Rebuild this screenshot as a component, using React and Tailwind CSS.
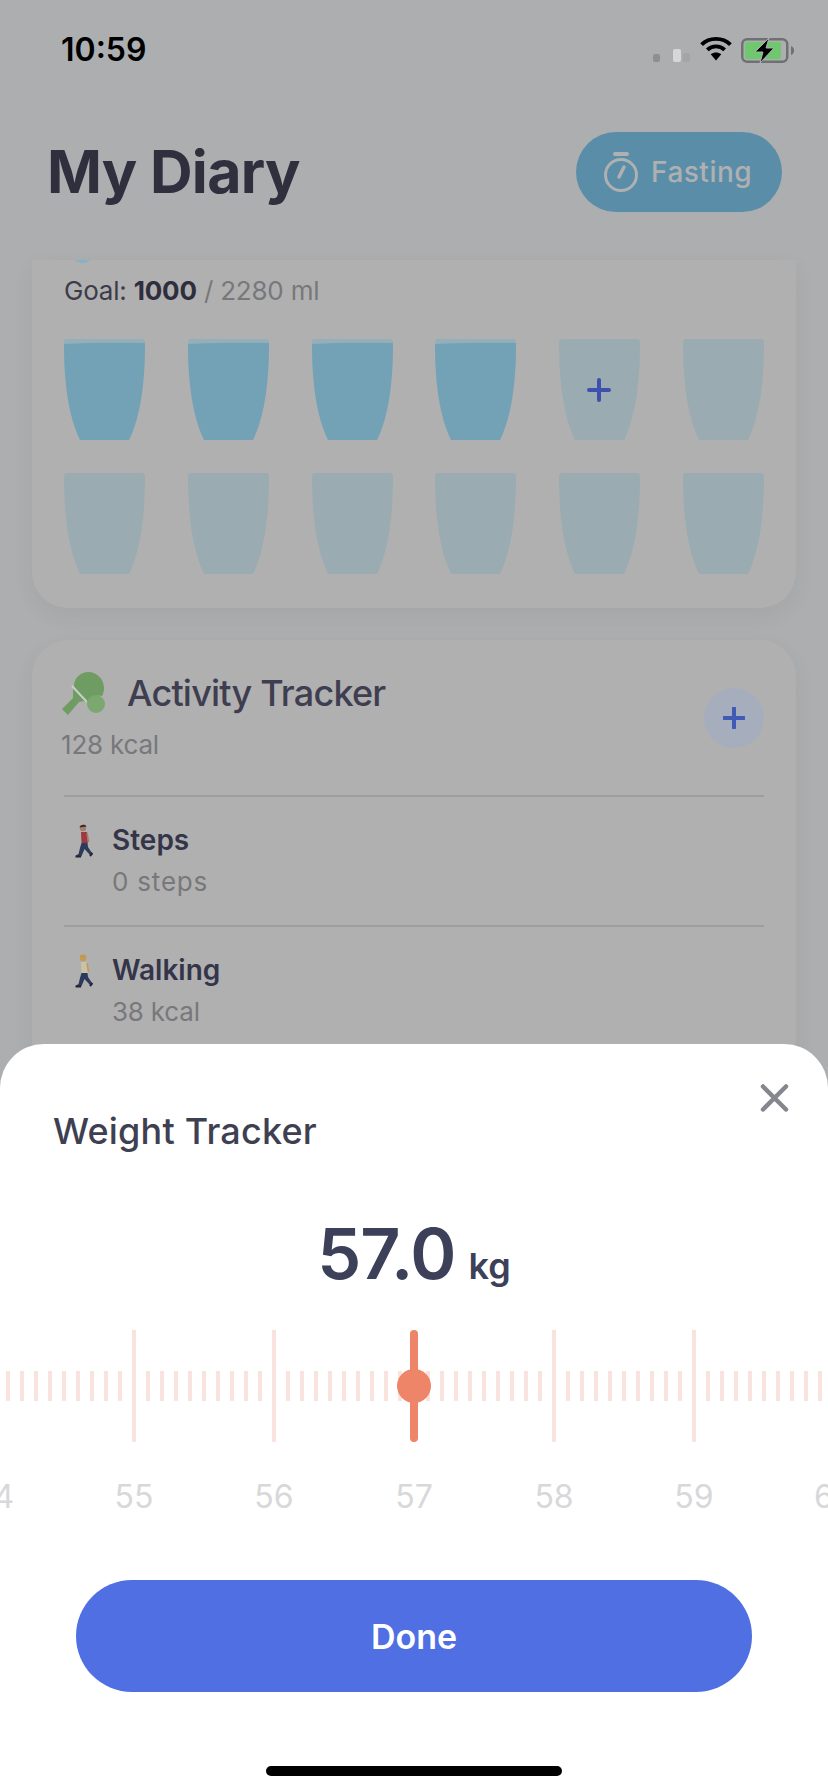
const ticks = Array.from({ length: 59 }, (_, i) => i);
const labels = [54, 55, 56, 57, 58, 59, 60];
const cups = Array.from({ length: 12 }, (_, i) => i);

function Cup({ filled, plus }) {
  const d = "M3 0H78Q81 0 81 3C81 42 77 76 65 101H16C4 76 0 42 0 3Q0 0 3 0Z";
  return (
    <svg width="81" height="101" viewBox="0 0 81 101" className="block">
      <clipPath id={filled ? "water-f" : "water-e"}>
        <path d={d} />
      </clipPath>
      <path d={d} fill={filled ? "#93afba" : "#9aacb1"} />
      {filled && <path d="M0 5Q40 3 81 4V101H0Z" fill="#73a1b6" clipPath="url(#water-f)" />}
      {plus && <path d="M40 41V61M30 51H50" stroke="#3d50ae" strokeWidth="4" strokeLinecap="round" />}
    </svg>
  );
}

function Paddle() {
  return (
    <svg width="44" height="43" viewBox="0 0 44 43" className="block">
      <path d="M13 14C13 5 21 0 27 0C36 0 43 7 43 16C43 20 42 22 41 24C35 22 29 26 28 31C24 30 20 28 16 24L13 14Z" fill="#6e9c62" />
      <path d="M12 16L23 29L18 30L7 43L1 37L12 26Z" fill="#6e9c62" />
      <path d="M11 14L26 30" stroke="#c9cfc4" strokeWidth="2" />
      <circle cx="35" cy="32" r="9" fill="#7aa86e" />
    </svg>
  );
}

function Walker({ shirt, hair, skin }) {
  return (
    <svg width="18" height="34" viewBox="0 0 18 34" className="block">
      <circle cx="8" cy="4" r="3.2" fill={skin} />
      <path d="M4.500 3.500C5 0 11 0 11.500 2.500C9 3 6.500 3 4.500 3.500Z" fill={hair} />
      <path d="M6 8H12L13 19H6.500Z" fill={shirt} />
      <path d="M12 9L13.500 18" stroke={skin} strokeWidth="1.600" />
      <path d="M6.500 19H12.500L13 23L17 29L15 31L9.500 25L7 31L6 33H1V31.500L3.500 30L5 24Z" fill="#2c3a5c" />
      <path d="M0.500 32.500H6M15 32L17.500 29" stroke="#24242c" strokeWidth="2" />
    </svg>
  );
}

function ActivityRow({ name, sub, walker, subClass }) {
  return (
    <div className="h-[130px] pt-[26px] flex items-start border-b-2 border-[#9d9d9e] last:border-b-0">
      <div className="w-[48px] pl-[11px] pt-[1px] shrink-0">{walker}</div>
      <div>
        <div className="text-[28px] leading-[34px] font-semibold text-[#34354a]">{name}</div>
        <div className={"mt-[8px] text-[26px] leading-[34px] text-[#77787b] " + subClass}>{sub}</div>
      </div>
    </div>
  );
}

export default function App() {
  return (
    <div className="relative w-[828px] h-[1792px] overflow-hidden bg-[#acaeb0] font-['Inter',sans-serif]">
      <div className="h-[100px] pl-[61px] pr-[33px] pt-[28px] flex justify-between items-start">
        <span className="text-[32px] leading-[44px] font-semibold text-black">10:59</span>
        <div className="flex items-end pt-[9px]">
          <div className="flex items-end mb-[1px] mr-[10px]">
            <span className="w-[7px] h-[8px] rounded-[2px] bg-[#8e8f90]" />
            <span className="ml-[13px] w-[8px] h-[13px] rounded-[2px] bg-[#d6d7d8]" />
            <span className="ml-[2px] w-[7px] h-[9px] rounded-[2px] bg-[#a4a5a6]" />
          </div>
          <svg width="32" height="25" viewBox="0 0 32 26" className="block mb-[1px] mr-[9px]">
            <path d="M1 8C9 0 23 0 31 8" fill="none" stroke="#000" strokeWidth="4" />
            <path d="M7 13.500C12 8.500 20 8.500 25 13.500" fill="none" stroke="#000" strokeWidth="4" />
            <path d="M10.500 18L16 24.500L21.500 18C18 15.500 14 15.500 10.500 18Z" fill="#000" />
          </svg>
          <svg width="54" height="25" viewBox="0 0 54 25" className="block">
            <rect x="1.250" y="1.250" width="45" height="22.500" rx="5" fill="none" stroke="#6f7072" strokeWidth="2.500" />
            <rect x="4" y="4" width="36" height="17" rx="2" fill="#6fc86e" />
            <path d="M50 8C54 9 54 16 50 17Z" fill="#6f7072" />
            <path d="M28 0L14 14H22L19 25L33 10H25Z" fill="#000" stroke="#acaeb0" strokeWidth="1" />
          </svg>
        </div>
      </div>

      <div className="h-[160px] pl-[47px] pr-[46px] pb-[48px] flex items-end justify-between">
        <h1 className="text-[59px] leading-[80px] font-bold text-[#2f2f3e] tracking-[-0.7px]">My Diary</h1>
        <div className="w-[206px] h-[80px] rounded-full bg-[#5a8ea8] flex items-center pl-[28px] gap-[13px]">
          <svg width="34" height="40" viewBox="0 0 34 40" fill="none" stroke="#aeb0b1" className="block">
            <circle cx="17" cy="23" r="15.500" strokeWidth="3" />
            <path d="M11 2H23" strokeWidth="4" strokeLinecap="round" />
            <path d="M15 25L20 15" strokeWidth="3.500" strokeLinecap="round" />
          </svg>
          <span className="text-[28px] leading-[36px] font-medium text-[#aeb0b1] tracking-[0.5px]">Fasting</span>
        </div>
      </div>

      <div className="mx-[32px]">
        <section className="relative h-[348px] rounded-b-[36px] bg-[#b0b0b0] shadow-[0_8px_24px_rgba(0,0,0,0.05)] px-[32px] pt-[13px] overflow-hidden">
          <div className="absolute left-[39px] top-[-20px] w-[23px] h-[23px] rounded-full bg-[#7fb4c4]" />
          <p className="text-[26px] leading-[36px] text-[#77787b] tracking-[-0.2px]">
            <span className="text-[#3c3c48]">Goal: </span>
            <span className="font-bold text-[#2e2e3c]">1000</span> / 2280 ml
          </p>
          <div className="mt-[30px] grid grid-cols-[repeat(6,81px)] justify-between gap-y-[33px]">
            {cups.map((i) => (
              <Cup key={i} filled={i < 4} plus={i === 4} />
            ))}
          </div>
        </section>

        <section className="relative mt-[32px] h-[460px] rounded-t-[36px] bg-[#b0b0b0] shadow-[0_8px_24px_rgba(0,0,0,0.05)] px-[32px]">
          <div className="flex justify-between h-[155px]">
            <div className="ml-[-3px]">
              <div className="flex items-start pt-[32px]">
                <Paddle />
                <span className="ml-[22px] text-[36px] leading-[42px] font-medium text-[#3e3e50] tracking-[-0.8px]">Activity Tracker</span>
              </div>
              <div className="mt-[14px] text-[26px] leading-[32px] text-[#77787b] tracking-[-0.2px]">128 kcal</div>
            </div>
            <div className="mt-[48px] w-[60px] h-[60px] rounded-full bg-[#a6adbc] flex items-center justify-center">
              <svg width="22" height="22" viewBox="0 0 22 22"><path d="M11 1V21M1 11H21" stroke="#3f5bb5" strokeWidth="4" strokeLinecap="round" /></svg>
            </div>
          </div>
          <div className="border-t-2 border-[#9d9d9e]">
            <ActivityRow name="Steps" sub="0 steps" subClass="tracking-[0.8px]" walker={<Walker shirt="#9c3a40" hair="#3b2a26" skin="#a87e6b" />} />
            <ActivityRow name="Walking" sub="38 kcal" subClass="tracking-[-0.2px]" walker={<Walker shirt="#c9c4a8" hair="#c49a3c" skin="#c49a5c" />} />
          </div>
        </section>
      </div>

      <div className="absolute left-0 right-0 bottom-0 h-[748px] rounded-t-[44px] bg-white">
        <div className="relative h-[138px] pl-[53px] pt-[64px]">
          <h2 className="text-[36px] leading-[46px] font-medium text-[#3f3f52] tracking-[0.2px]">Weight Tracker</h2>
          <svg width="30" height="28" viewBox="0 0 30 28" className="absolute left-[760px] top-[40px]">
            <path d="M3 2.500L26 25.500M26 2.500L3 25.500" stroke="#85878f" strokeWidth="4.500" strokeLinecap="round" />
          </svg>
        </div>
        <div className="h-[148px] flex items-baseline justify-center gap-[13px] pt-[32px]">
          <span className="text-[70px] leading-[80px] font-semibold text-[#3c4058] tracking-[-1px]">57.0</span>
          <span className="text-[36px] leading-[40px] font-semibold text-[#3c4058]">kg</span>
        </div>

        <div className="relative h-[112px] overflow-hidden">
          <div className="h-full flex items-center gap-[10px] pl-[6px]">
            {ticks.map((i) => (
              <div key={i} className={i % 10 === 9 ? "w-[4px] h-[112px] shrink-0 bg-[#fae3df]" : "w-[4px] h-[30px] shrink-0 bg-[#fae3df]"} />
            ))}
          </div>
          <div className="absolute left-[410px] top-0 w-[8px] h-[112px] rounded-full bg-[#ee8468]" />
          <div className="absolute left-[397px] top-[39px] w-[34px] h-[34px] rounded-full bg-[#ee8468]" />
        </div>

        <div className="mt-[33px] h-[44px] flex ml-[-76px]">
          {labels.map((n) => (
            <div key={n} className="w-[140px] shrink-0 text-center text-[32px] leading-[44px] text-[#d8d8da]">{n}</div>
          ))}
        </div>

        <div className="mt-[61px] mx-[76px] h-[112px] rounded-full bg-[#4f6fe3] flex items-center justify-center text-[34px] font-semibold text-white">Done</div>
        <div className="mt-[74px] mx-auto w-[296px] h-[10px] rounded-full bg-black" />
      </div>
    </div>
  );
}
